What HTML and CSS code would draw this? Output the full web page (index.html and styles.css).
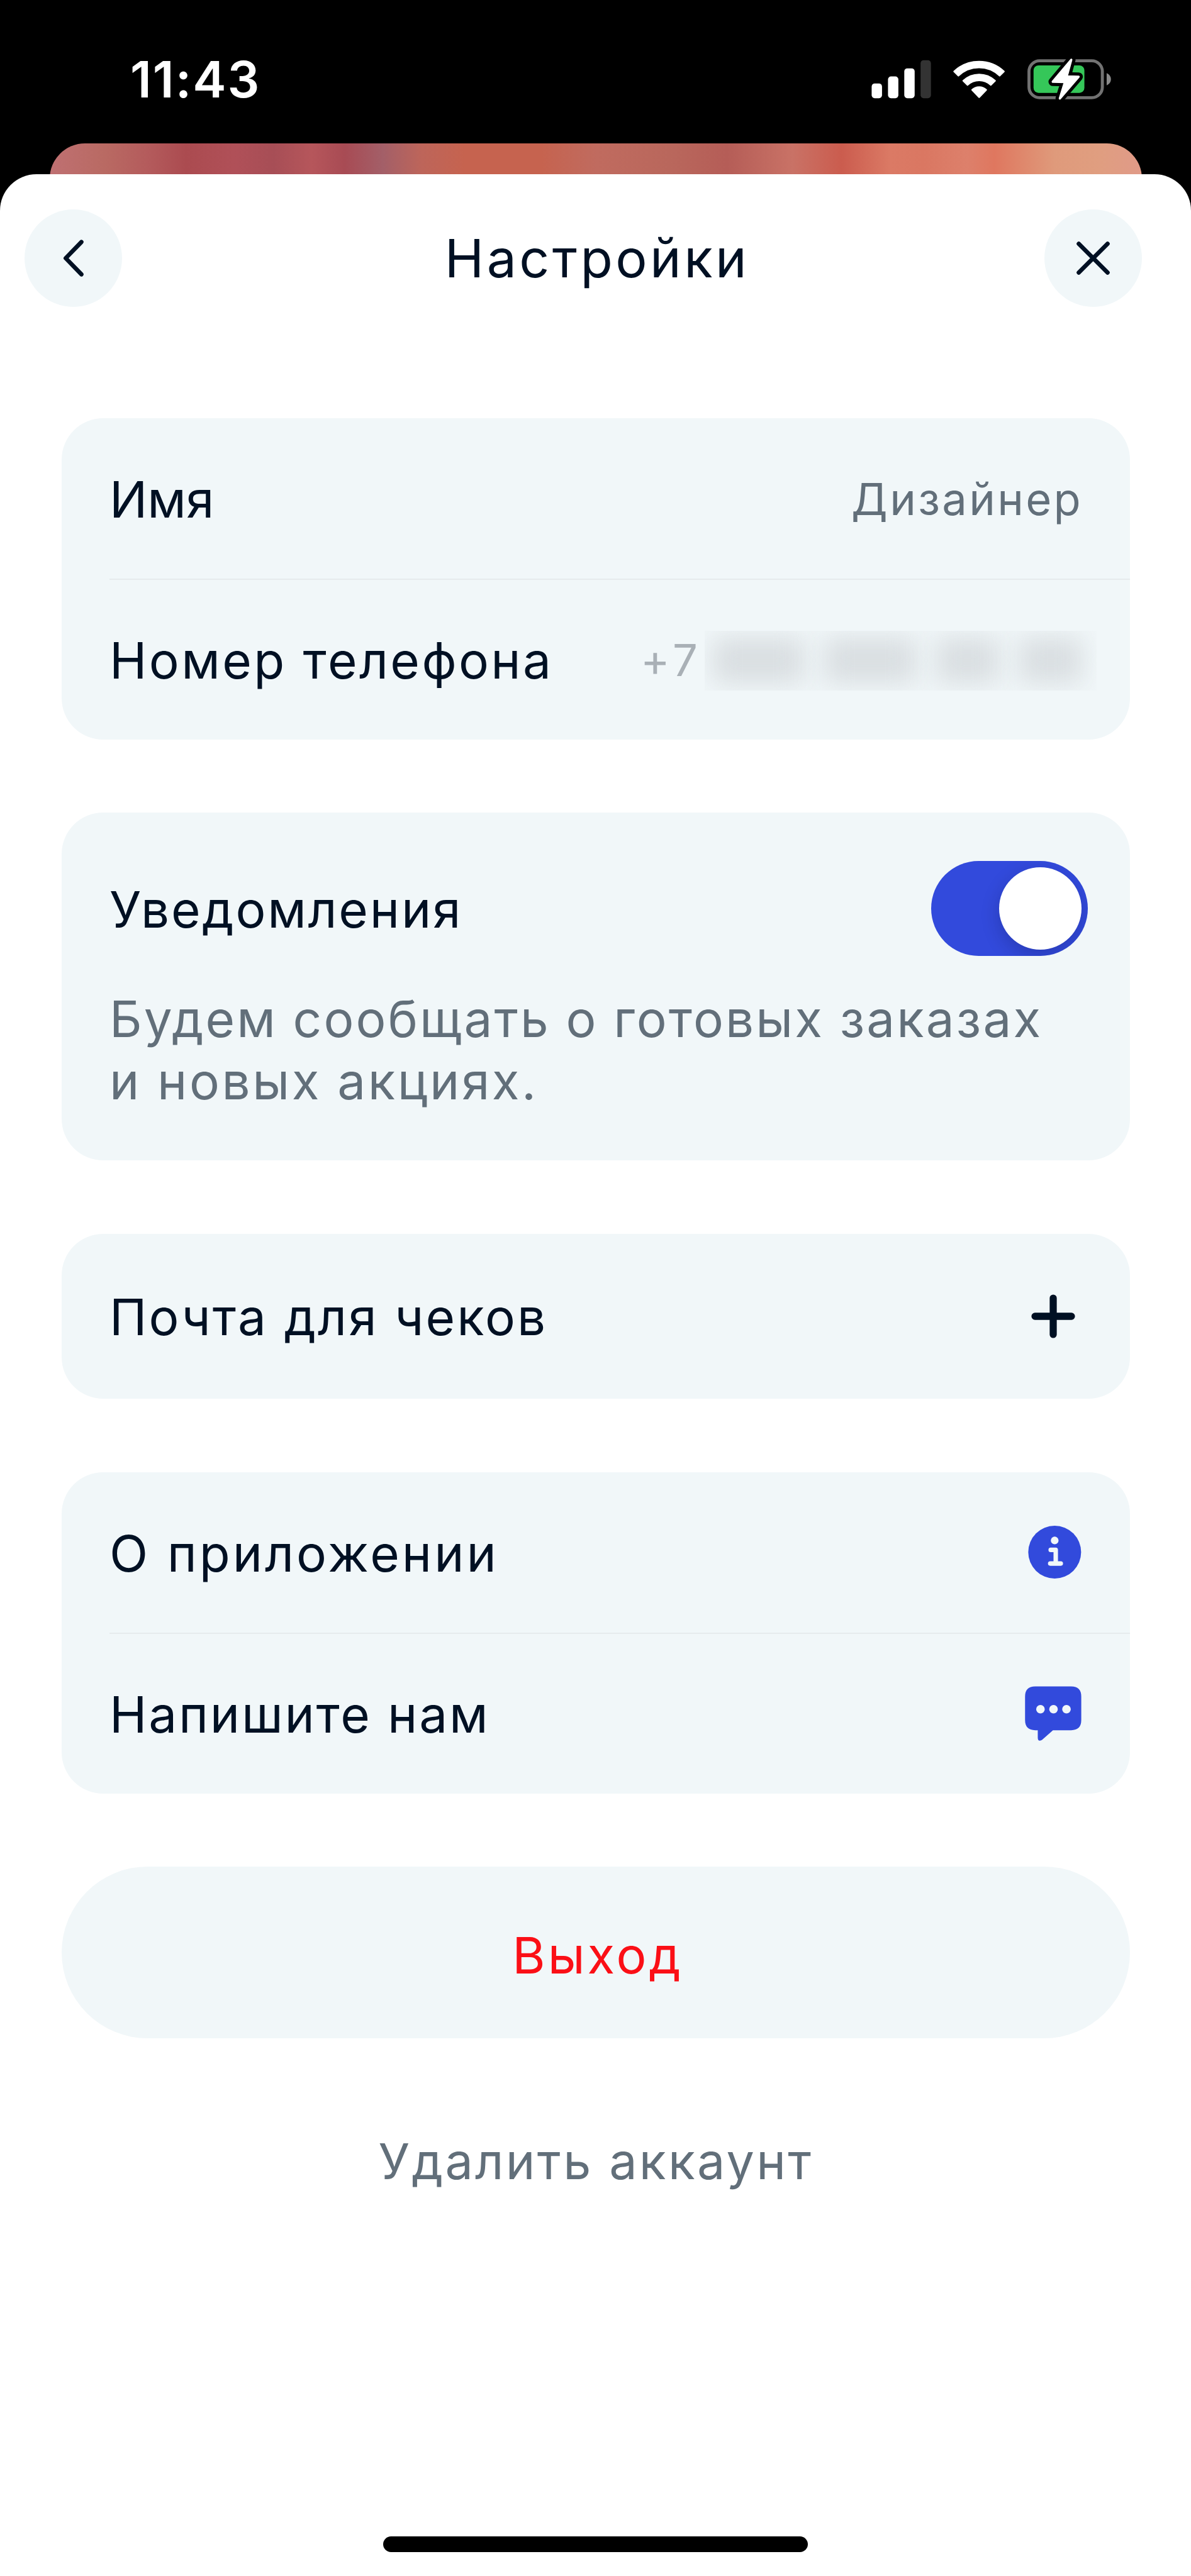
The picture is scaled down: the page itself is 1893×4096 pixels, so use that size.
FILE: index.html
```
<!DOCTYPE html>
<html lang="ru">
<head>
    <meta charset="UTF-8">
    <meta name="viewport" content="width=device-width, initial-scale=1.0">
    <title>Настройки</title>
    <link rel="stylesheet" href="styles.css">
</head>
<body>
    <div class="status-bar">
        <span class="time">11:43</span>
        <svg class="status-icons" viewBox="1715 110 485 90">
            <!-- signal -->
            <g fill="#fff">
                <rect x="1720.5" y="164.5" width="20.5" height="29" rx="6"/>
                <rect x="1752.8" y="150.5" width="20.5" height="43" rx="6"/>
                <rect x="1785" y="134.5" width="20.5" height="59" rx="6"/>
                <rect x="1817.2" y="118.5" width="20.5" height="75" rx="6" fill="#333"/>
            </g>
            <!-- wifi -->
            <g fill="#fff" stroke="#fff" stroke-width="3" stroke-linejoin="round">
                <path d="M1883.5 140.5 A72 72 0 0 1 1982 140.5 L1973.5 149 A59 59 0 0 0 1892 149 Z"/>
                <path d="M1901.5 159 A46 46 0 0 1 1964.5 159 L1956 167.5 A33.5 33.5 0 0 0 1910 167.5 Z"/>
                <path d="M1919 177 A20.5 20.5 0 0 1 1947 177 L1933 191.5 Z"/>
            </g>
            <!-- battery -->
            <rect x="2031.5" y="119.5" width="145" height="73" rx="21" fill="none" stroke="#727272" stroke-width="6"/>
            <path d="M2185 144 Q2193.5 148 2193.5 156 Q2193.5 164 2185 168 Z" fill="#8a8a8a"/>
            <rect x="2040.5" y="128.5" width="100.5" height="54.5" rx="10" fill="#35c759"/>
            <path d="M2115 117.5 L2078.5 161 L2102.5 161.5 L2092.5 194 L2129.5 151 L2106 150.500 Z" fill="#000" stroke="#000" stroke-width="17" stroke-linejoin="round"/>
            <path d="M2115 117.5 L2078.5 161 L2102.5 161.5 L2092.5 194 L2129.5 151 L2106 150.500 Z" fill="#fff" stroke="#fff" stroke-width="4.5" stroke-linejoin="round"/>
        </svg>
    </div>
    <div class="backdrop"></div>

    <div class="sheet">
        <div class="header">
            <button class="round-btn">
                <svg viewBox="-96.5 -96.5 193 193"><path d="M16 -32 L-15 0 L16 32"/></svg>
            </button>
            <h1 class="title">Настройки</h1>
            <button class="round-btn">
                <svg viewBox="-96.5 -96.5 193 193"><path d="M-28.5 -28.5 L28.5 28.5 M28.5 -28.5 L-28.5 28.5"/></svg>
            </button>
        </div>

        <div class="content">
            <div class="card">
                <div class="row">
                    <span class="label label-name">Имя</span>
                    <span class="value">Дизайнер</span>
                </div>
                <div class="row">
                    <span class="label label-phone">Номер телефона</span>
                    <span class="value value-phone">+7</span>
                    <div class="hidden-number">
                        <i class="long"></i><i class="long"></i><i></i><i></i>
                    </div>
                </div>
            </div>

            <div class="card card-notify">
                <div class="notify-head">
                    <span class="label">Уведомления</span>
                    <div class="toggle"><div class="knob"></div></div>
                </div>
                <p class="hint">Будем сообщать о готовых заказах<br><span class="hint-end">и новых акциях.</span></p>
            </div>

            <div class="card">
                <div class="row row-single">
                    <span class="label label-mail">Почта для чеков</span>
                    <svg class="icon" viewBox="-58.4 -58.4 116.8 116.8">
                        <path d="M-36 0 H36 M0 -36 V36" stroke="#001023" stroke-width="14" stroke-linecap="round"/>
                    </svg>
                </div>
            </div>

            <div class="card">
                <div class="row">
                    <span class="label label-about">О приложении</span>
                    <svg class="icon" viewBox="-58.4 -58.4 116.8 116.8">
                        <circle cx="2.9" cy="0" r="52.2" fill="#324adc"/>
                        <circle cx="2.9" cy="-23" r="7.6" fill="#f1f7f9"/>
                        <path d="M-5 -4.500 H5 V22.500 M-6 22.500 H15" fill="none" stroke="#f1f7f9" stroke-width="8.8" stroke-linecap="round" stroke-linejoin="round"/>
                    </svg>
                </div>
                <div class="row">
                    <span class="label">Напишите нам</span>
                    <svg class="icon" viewBox="-58.4 -58.4 116.8 116.8">
                        <path d="M-35.6 -54 H35.4 Q55.4 -54 55.4 -34 V12.5 Q55.4 32.5 35.4 32.5 H-0.5 L-22 51.5 Q-30.5 56.5 -30.5 47 V32.5 H-35.6 Q-55.6 32.5 -55.6 12.5 V-34 Q-55.6 -54 -35.6 -54 Z" fill="#324adc"/>
                        <g fill="#f1f7f9">
                            <circle cx="-25.2" cy="-9" r="8.5"/>
                            <circle cx="0.6" cy="-9" r="8.5"/>
                            <circle cx="26.2" cy="-9" r="8.5"/>
                        </g>
                    </svg>
                </div>
            </div>

            <button class="logout">Выход</button>
            <a class="delete">Удалить аккаунт</a>
        </div>

        <div class="home-indicator"></div>
    </div>
</body>
</html>
```
FILE: styles.css
```
* {
    box-sizing: border-box;
}
body {
    margin: 0;
    background-color: #000;
    font-family: Inter, "Liberation Sans", sans-serif;
    font-size: 80px;
    color: #001023;
}
button {
    border: none;
    padding: 0;
    font-family: inherit;
    background-color: #f1f7f9;
}

/* status bar */
.status-bar {
    display: flex;
    justify-content: space-between;
    height: 228px;
    padding: 76px 122px 0 207px;
}
.time {
    height: 100px;
    line-height: 100px;
    font-size: 80px;
    font-weight: 600;
    letter-spacing: 2px;
    color: #fff;
}
.status-icons {
    width: 390px;
    height: 72.4px;
    margin-top: 12.5px;
}

/* edge of the screen behind the sheet */
.backdrop {
    height: 120px;
    margin: 0 78.5px;
    border-radius: 56px 56px 0 0;
    background: linear-gradient(90deg, #bf7072 0%, #b96a63 5%, #b45b5c 9%, #ab4b50 12.5%, #b05058 17%, #a74e56 20.5%, #b6565b 24%, #a84b54 27%, #a35f68 30.5%, #bd655a 34%, #c6634f 38%, #c6634f 45%, #c06b5f 50%, #b9675c 57%, #b55d57 62%, #c97266 68%, #cb5c4e 72.5%, #db7a65 77%, #da7762 80%, #dd806b 84%, #df775f 86.5%, #df9a7b 92%, #e09e80 96%, #e09a88 100%);
}

/* sheet */
.sheet {
    position: relative;
    display: flex;
    flex-direction: column;
    height: 3819px;
    margin-top: -71px;
    padding-bottom: 38.5px;
    border-radius: 58px 58px 0 0;
    background-color: #fff;
}
.header {
    display: grid;
    grid-template-columns: 155px 1fr 155px;
    align-items: center;
    padding: 56px 78px 0 39px;
}
.round-btn {
    height: 155px;
    border-radius: 50%;
}
.round-btn svg {
    display: block;
    width: 155px;
    height: 155px;
    fill: none;
    stroke: #001023;
    stroke-width: 8.5;
    stroke-linecap: round;
    stroke-linejoin: round;
}
.title {
    margin: 0;
    padding-left: 44px;
    font-size: 84px;
    font-weight: 400;
    line-height: 100px;
    letter-spacing: 4.4px;
    text-align: center;
}
.content {
    display: flex;
    flex-direction: column;
    gap: 116.5px;
    padding: 176.5px 97px 0 98px;
}
.card {
    border-radius: 66px;
    background-color: #f1f7f9;
}
.row {
    display: flex;
    align-items: center;
    justify-content: space-between;
    height: 255.5px;
    margin-left: 76px;
    padding-right: 75px;
}
.row + .row {
    border-top: 2px solid #e6ebed;
}
.row-single {
    height: 262.5px;
}
.label {
    padding-top: 3px;
    letter-spacing: 2.8px;
    line-height: 100px;
    white-space: nowrap;
}
.label-name {
    letter-spacing: 0;
}
.label-phone {
    letter-spacing: 3.4px;
}
.label-mail {
    letter-spacing: 3.1px;
}
.label-about {
    letter-spacing: 4px;
}
.value {
    padding-top: 3px;
    font-size: 70.5px;
    line-height: 100px;
    letter-spacing: 3.3px;
    color: #626f7a;
}
.value-phone {
    margin-left: auto;
    letter-spacing: 6px;
    color: #a9b0b6;
}
.hidden-number {
    display: flex;
    align-items: center;
    gap: 32px;
    width: 623px;
    height: 95px;
    margin: 3px -22px 0 5px;
    padding-left: 12px;
    overflow: hidden;
}
.hidden-number i {
    width: 100px;
    height: 74px;
    background-color: #d9dee1;
    filter: blur(20px);
}
.hidden-number .long {
    width: 146px;
}
.icon {
    width: 94px;
    height: 94px;
}

/* notifications */
.card-notify {
    height: 553px;
    padding: 77px 67px 0 76px;
}
.notify-head {
    display: flex;
    align-items: center;
    justify-content: space-between;
    height: 151px;
}
.toggle {
    display: flex;
    justify-content: flex-end;
    width: 249px;
    height: 151px;
    padding: 10px;
    border-radius: 76px;
    background-color: #324adc;
    overflow: hidden;
}
.knob {
    width: 131px;
    height: 131px;
    border-radius: 50%;
    background-color: #fff;
    box-shadow: 0 10px 30px rgba(0, 0, 30, 0.2);
}
.hint {
    margin: 51px 0 0;
    font-size: 80px;
    line-height: 98.7px;
    letter-spacing: 3.1px;
    word-spacing: -1px;
    white-space: nowrap;
    color: #626f7a;
}
.hint-end {
    letter-spacing: 3.6px;
}

.logout {
    height: 273px;
    padding: 8px 0 0 6px;
    border-radius: 137px;
    font-size: 80px;
    letter-spacing: 4px;
    color: #fb0f16;
}
.delete {
    margin-top: 28px;
    font-size: 79px;
    line-height: 100px;
    letter-spacing: 3.3px;
    text-align: center;
    color: #626f7a;
}
.home-indicator {
    width: 675px;
    height: 25px;
    margin: auto auto 0;
    border-radius: 13px;
    background-color: #000;
}
```
